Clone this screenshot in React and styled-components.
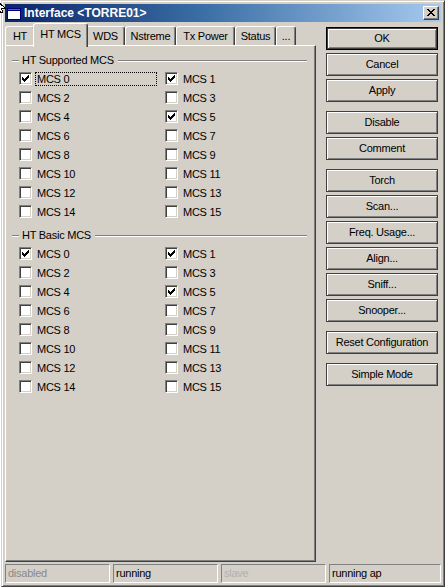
import React from 'react';
import styled, { createGlobalStyle } from 'styled-components';

const Global = createGlobalStyle`
  html, body { margin: 0; padding: 0; background: #ffffff; }
  body {
    font-family: "Liberation Sans", Arial, sans-serif;
    font-size: 11px;
    letter-spacing: -0.25px;
    color: #000;
  }
  #root { position: relative; width: 445px; height: 588px; overflow: hidden; }
`;

const Window = styled.div`
  box-sizing: border-box;
  width: 444px;
  height: 587px;
  margin-left: 1px;
  background: #d4d0c8;
  border: 1px solid;
  border-color: #d4d0c8 #404040 #404040 #d4d0c8;
  box-shadow: inset 1px 1px 0 #ffffff, inset -1px -1px 0 #808080;
  padding: 3px;
  display: flex;
  flex-direction: column;
`;

const TitleBar = styled.div`
  height: 18px;
  flex: none;
  display: flex;
  align-items: center;
  padding: 0 2px;
  background: linear-gradient(90deg, #0a246a 0%, #3a6ea5 45%, #a6caf0 100%);
`;

const TitleText = styled.span`
  margin-left: 3px;
  color: #ffffff;
  font-weight: bold;
  font-size: 12px;
  letter-spacing: 0;
  white-space: nowrap;
`;

const CloseButton = styled.div`
  margin-left: auto;
  box-sizing: border-box;
  width: 16px;
  height: 14px;
  background: #d4d0c8;
  border: 1px solid;
  border-color: #ffffff #404040 #404040 #ffffff;
  box-shadow: inset -1px -1px 0 #808080;
  display: flex;
  align-items: center;
  justify-content: center;
  padding: 0 1px 1px 0;
`;

const Body = styled.div`
  flex: 1;
  display: flex;
  flex-direction: column;
  margin-top: 1px;
`;

const Main = styled.div`
  flex: 1;
  display: flex;
`;

const LeftCol = styled.div`
  width: 311px;
  display: flex;
  flex-direction: column;
`;

const TabStrip = styled.div`
  height: 22px;
  flex: none;
  display: flex;
  align-items: flex-start;
  position: relative;
  z-index: 2;
`;

const Tab = styled.div`
  box-sizing: border-box;
  flex: none;
  width: ${p => (p.$active ? p.$w + 4 : p.$w)}px;
  height: ${p => (p.$active ? 24 : 19)}px;
  margin: ${p => (p.$active ? '0 -2px 0 -2px' : '3px 0 0 0')};
  padding-top: ${p => (p.$active ? 4 : 3)}px;
  line-height: 13px;
  text-align: center;
  white-space: nowrap;
  background: #d4d0c8;
  border-top: 1px solid #ffffff;
  border-left: 1px solid #ffffff;
  border-right: 1px solid #404040;
  border-radius: 3px 3px 0 0;
  box-shadow: inset -1px 0 0 #808080;
  position: relative;
  z-index: ${p => (p.$active ? 3 : 1)};
`;

const Panel = styled.div`
  flex: 1;
  box-sizing: border-box;
  background: #d4d0c8;
  border: 1px solid;
  border-color: #ffffff #404040 #404040 #ffffff;
  box-shadow: inset -1px -1px 0 #808080;
  padding: 7px 8px 0 6px;
`;

const GroupHeading = styled.div`
  height: 14px;
  display: flex;
  align-items: center;
  margin-top: ${p => p.$mt || 0}px;
`;

const Etch = styled.div`
  height: 0;
  border-top: 1px solid #808080;
  border-bottom: 1px solid #ffffff;
  width: ${p => (p.$w ? `${p.$w}px` : 'auto')};
  flex: ${p => (p.$w ? 'none' : '1')};
  margin-top: 1px;
`;

const HeadingText = styled.span`
  margin: 0 4px 0 3px;
  line-height: 13px;
  white-space: nowrap;
`;

const CheckGrid = styled.div`
  display: grid;
  grid-template-columns: 146px 1fr;
  grid-auto-rows: 19px;
  padding-left: 7px;
  margin-top: 2px;
`;

const CheckRow = styled.div`
  display: flex;
  align-items: center;
`;

const Box = styled.span`
  box-sizing: border-box;
  flex: none;
  width: 13px;
  height: 13px;
  background: #ffffff;
  border: 1px solid;
  border-color: #808080 #ffffff #ffffff #808080;
  box-shadow: inset 1px 1px 0 #404040, inset -1px -1px 0 #d4d0c8;
  display: flex;
  align-items: center;
  justify-content: center;
`;

const Label = styled.span`
  box-sizing: border-box;
  flex: 1;
  height: 14px;
  margin: 0 8px 0 3px;
  padding: 0 1px;
  line-height: 12px;
  border: 1px dotted ${p => (p.$focused ? '#000000' : 'transparent')};
  white-space: nowrap;
`;

const ButtonCol = styled.div`
  width: 112px;
  margin-left: 10px;
  padding-top: 4px;
  display: flex;
  flex-direction: column;
  gap: 9px;
`;

const ButtonGroup = styled.div`
  display: flex;
  flex-direction: column;
  gap: 3px;
`;

const Button = styled.div`
  box-sizing: border-box;
  height: 23px;
  display: flex;
  align-items: center;
  justify-content: center;
  white-space: nowrap;
  background: #d4d0c8;
  border: 1px solid ${p => (p.$default ? '#000000' : '#404040')};
  box-shadow: ${p =>
    p.$default
      ? 'inset 0 0 0 1px #404040, inset 2px 2px 0 #ffffff, inset -2px -2px 0 #808080'
      : 'inset 1px 1px 0 #ffffff, inset -1px -1px 0 #808080'};
  padding-bottom: 1px;
`;

const StatusBar = styled.div`
  margin-top: 2px;
  height: 19px;
  flex: none;
  display: grid;
  grid-template-columns: 105px 105px 105px 1fr;
  gap: 3px;
`;

const StatusField = styled.div`
  box-sizing: border-box;
  border: 1px solid;
  border-color: #808080 #ffffff #ffffff #808080;
  padding-left: 2px;
  line-height: 17px;
  white-space: nowrap;
  overflow: hidden;
  color: ${p => p.$color || '#000000'};
`;

const Cursor = styled.svg`
  position: absolute;
  left: -4px;
  top: 0;
  z-index: 10;
`;

const CheckMark = () => (
  <svg width="7" height="7" viewBox="0 0 7 7" shapeRendering="crispEdges">
    <path
      fill="#000"
      d="M6 0h1v1h-1z M5 1h2v1h-2z M0 2h1v1h-1z M4 2h3v1h-3z M0 3h2v1h-2z M3 3h3v1h-3z M0 4h5v1h-5z M1 5h3v1h-3z M2 6h1v1h-1z"
    />
  </svg>
);

const CloseX = () => (
  <svg width="8" height="7" viewBox="0 0 8 7" shapeRendering="crispEdges">
    <path
      fill="#000"
      d="M0 0h2v1h-2z M6 0h2v1h-2z M1 1h2v1h-2z M5 1h2v1h-2z M2 2h4v1h-4z M3 3h2v1h-2z M2 4h4v1h-4z M1 5h2v1h-2z M5 5h2v1h-2z M0 6h2v1h-2z M6 6h2v1h-2z"
    />
  </svg>
);

const WinIcon = () => (
  <svg width="14" height="13" viewBox="0 0 14 13" shapeRendering="crispEdges">
    <rect x="0" y="1" width="14" height="12" fill="#000080" />
    <rect x="1" y="4" width="12" height="8" fill="#ffffff" />
    <rect x="1" y="2" width="12" height="1" fill="#1084d0" />
  </svg>
);

const Check = ({ label, checked, focused }) => (
  <CheckRow>
    <Box>{checked && <CheckMark />}</Box>
    <Label $focused={focused}>{label}</Label>
  </CheckRow>
);

const tabs = [
  { t: 'HT', w: 30 },
  { t: 'HT MCS', w: 51, active: true },
  { t: 'WDS', w: 39 },
  { t: 'Nstreme', w: 51 },
  { t: 'Tx Power', w: 59 },
  { t: 'Status', w: 41 },
  { t: '...', w: 20 },
];

const buttonGroups = [
  ['OK', 'Cancel', 'Apply'],
  ['Disable', 'Comment'],
  ['Torch', 'Scan...', 'Freq. Usage...', 'Align...', 'Sniff...', 'Snooper...'],
  ['Reset Configuration'],
  ['Simple Mode'],
];

const mcs = Array.from({ length: 16 }, (_, i) => i);

const Group = ({ title, checked, focusFirst, mt }) => (
  <>
    <GroupHeading $mt={mt}>
      <Etch $w={7} />
      <HeadingText>{title}</HeadingText>
      <Etch />
    </GroupHeading>
    <CheckGrid>
      {mcs.map(i => (
        <Check
          key={i}
          label={`MCS ${i}`}
          checked={checked.includes(i)}
          focused={focusFirst && i === 0}
        />
      ))}
    </CheckGrid>
  </>
);

export default function App() {
  return (
    <>
      <Global />
      <Cursor width="10" height="14" viewBox="0 0 10 14" shapeRendering="crispEdges">
        <path d="M0 0 L0 12 L3 9 L5 13 L7 12 L5 8 L9 8 Z" fill="#fff" stroke="#000" strokeWidth="1" />
      </Cursor>
      <Window>
        <TitleBar>
          <WinIcon />
          <TitleText>Interface &lt;TORRE01&gt;</TitleText>
          <CloseButton>
            <CloseX />
          </CloseButton>
        </TitleBar>
        <Body>
          <Main>
            <LeftCol>
              <TabStrip>
                {tabs.map(tb => (
                  <Tab key={tb.t} $w={tb.w} $active={tb.active}>
                    {tb.t}
                  </Tab>
                ))}
              </TabStrip>
              <Panel>
                <Group title="HT Supported MCS" checked={[0, 1, 5]} focusFirst />
                <Group title="HT Basic MCS" checked={[0, 1, 5]} mt={7} />
              </Panel>
            </LeftCol>
            <ButtonCol>
              {buttonGroups.map((g, gi) => (
                <ButtonGroup key={gi}>
                  {g.map(b => (
                    <Button key={b} $default={b === 'OK'}>
                      {b}
                    </Button>
                  ))}
                </ButtonGroup>
              ))}
            </ButtonCol>
          </Main>
          <StatusBar>
            <StatusField $color="#8a8a8a">disabled</StatusField>
            <StatusField>running</StatusField>
            <StatusField $color="#b0b0b0">slave</StatusField>
            <StatusField>running ap</StatusField>
          </StatusBar>
        </Body>
      </Window>
    </>
  );
}
